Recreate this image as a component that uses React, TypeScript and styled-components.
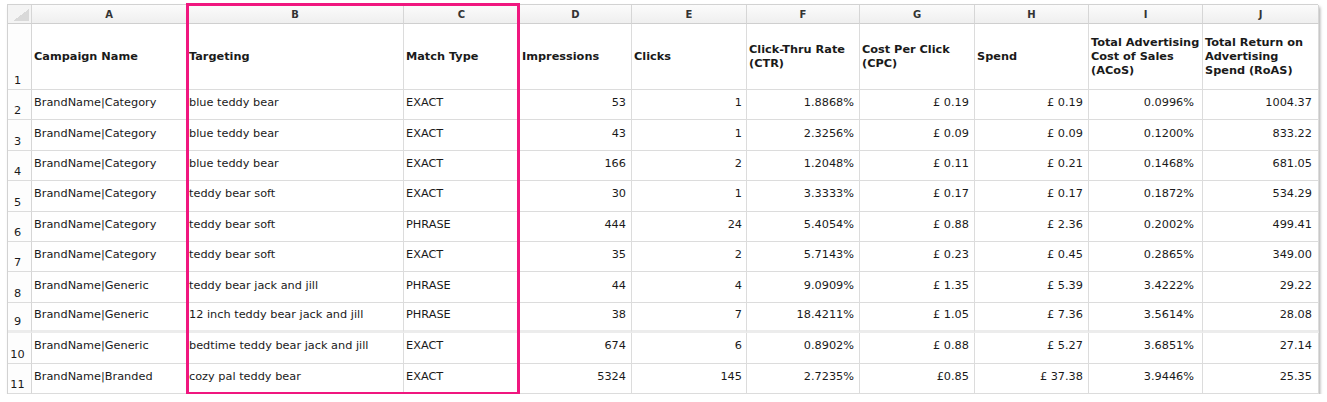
import React from "react";
import styled, { createGlobalStyle } from "styled-components";

const GlobalStyle = createGlobalStyle`
  html, body { margin: 0; padding: 0; background: #ffffff; }
  body { font-family: "DejaVu Sans", "Verdana", sans-serif; color: #1a1a1a; }
`;

const COLS = "24px 155px 217px 116px 112px 115px 113px 115px 114px 114px 116px";

const Page = styled.div`
  padding: 4px 0 0 7px;
`;

const Sheet = styled.div`
  position: relative;
  width: 1311px;
  border-top: 1px solid #d2d2d2;
  border-left: 1px solid #d2d2d2;
  box-sizing: border-box;
  box-shadow: 2px 3px 3px rgba(0, 0, 0, 0.35);
  background: #fff;
`;

const Row = styled.div<{ $h: number }>`
  display: grid;
  grid-template-columns: ${COLS};
  height: ${(p) => p.$h}px;
`;

const LetterCell = styled.div`
  box-sizing: border-box;
  border-right: 1px solid #d6d6d6;
  border-bottom: 1px solid #cfcfcf;
  background: linear-gradient(#fbfbfb, #efefef);
  display: flex;
  align-items: center;
  justify-content: center;
  font-size: 10px;
  font-weight: bold;
  color: #333;
`;

const Corner = styled.div`
  box-sizing: border-box;
  border-right: 1px solid #d6d6d6;
  border-bottom: 1px solid #cfcfcf;
  background: #f4f4f4;
  padding: 4px 2px 2px 5px;
  display: flex;
`;

const CornerTriangle = styled.div`
  flex: 1;
  background: linear-gradient(to bottom right, transparent 50%, #d9d9d9 50%);
`;

const RowNum = styled.div<{ $thick?: boolean }>`
  box-sizing: border-box;
  border-right: 1px solid #d6d6d6;
  border-bottom: ${(p) => (p.$thick ? "3px solid #ececec" : "1px solid #dcdcdc")};
  background: #fdfdfd;
  display: flex;
  align-items: flex-end;
  justify-content: center;
  padding: 0 4px 2px 0;
  font-size: 11.3px;
  color: #1a1a1a;
`;

const Cell = styled.div<{ $align?: "left" | "right"; $pr?: number; $thick?: boolean; $head?: boolean }>`
  box-sizing: border-box;
  border-right: 1px solid #dcdcdc;
  border-bottom: ${(p) => (p.$thick ? "3px solid #ececec" : "1px solid #dcdcdc")};
  display: flex;
  align-items: center;
  justify-content: ${(p) => (p.$align === "right" ? "flex-end" : "flex-start")};
  padding: ${(p) => (p.$head ? "0 1px 0 2px" : `0 ${p.$pr ?? 5}px 3px 2px`)};
  font-size: 11.3px;
  line-height: 14px;
  font-weight: ${(p) => (p.$head ? "bold" : "normal")};
  white-space: ${(p) => (p.$head ? "normal" : "nowrap")};
  color: #1a1a1a;
  overflow: hidden;
`;

const Highlight = styled.div`
  position: absolute;
  left: 178px;
  top: -2px;
  width: 334px;
  height: 392px;
  border: 3px solid #f0177f;
  box-sizing: border-box;
  pointer-events: none;
`;

const letters = ["A", "B", "C", "D", "E", "F", "G", "H", "I", "J"];

const headers = [
  "Campaign Name",
  "Targeting",
  "Match Type",
  "Impressions",
  "Clicks",
  "Click-Thru Rate (CTR)",
  "Cost Per Click (CPC)",
  "Spend",
  "Total Advertising Cost of Sales (ACoS)",
  "Total Return on Advertising Spend (RoAS)",
];

const rows: string[][] = [
  ["BrandName|Category", "blue teddy bear", "EXACT", "53", "1", "1.8868%", "£ 0.19", "£ 0.19", "0.0996%", "1004.37"],
  ["BrandName|Category", "blue teddy bear", "EXACT", "43", "1", "2.3256%", "£ 0.09", "£ 0.09", "0.1200%", "833.22"],
  ["BrandName|Category", "blue teddy bear", "EXACT", "166", "2", "1.2048%", "£ 0.11", "£ 0.21", "0.1468%", "681.05"],
  ["BrandName|Category", "teddy bear soft", "EXACT", "30", "1", "3.3333%", "£ 0.17", "£ 0.17", "0.1872%", "534.29"],
  ["BrandName|Category", "teddy bear soft", "PHRASE", "444", "24", "5.4054%", "£ 0.88", "£ 2.36", "0.2002%", "499.41"],
  ["BrandName|Category", "teddy bear soft", "EXACT", "35", "2", "5.7143%", "£ 0.23", "£ 0.45", "0.2865%", "349.00"],
  ["BrandName|Generic", "teddy bear jack and jill", "PHRASE", "44", "4", "9.0909%", "£ 1.35", "£ 5.39", "3.4222%", "29.22"],
  ["BrandName|Generic", "12 inch teddy bear jack and jill", "PHRASE", "38", "7", "18.4211%", "£ 1.05", "£ 7.36", "3.5614%", "28.08"],
  ["BrandName|Generic", "bedtime teddy bear jack and jill", "EXACT", "674", "6", "0.8902%", "£ 0.88", "£ 5.27", "3.6851%", "27.14"],
  ["BrandName|Branded", "cozy pal teddy bear", "EXACT", "5324", "145", "2.7235%", "£0.85", "£ 37.38", "3.9446%", "25.35"],
];

const rightPad = [5, 5, 5, 5, 4, 5, 5, 5, 8, 6];

export default function App() {
  return (
    <>
      <GlobalStyle />
      <Page>
        <Sheet>
          <Row $h={19}>
            <Corner>
              <CornerTriangle />
            </Corner>
            {letters.map((l) => (
              <LetterCell key={l}>{l}</LetterCell>
            ))}
          </Row>
          <Row $h={66}>
            <RowNum>1</RowNum>
            {headers.map((h) => (
              <Cell key={h} $head>
                {h}
              </Cell>
            ))}
          </Row>
          {rows.map((r, i) => {
            const thick = i === 7;
            return (
              <Row key={i} $h={30.4}>
                <RowNum $thick={thick}>{i + 2}</RowNum>
                {r.map((v, j) => (
                  <Cell key={j} $align={j >= 3 ? "right" : "left"} $pr={rightPad[j]} $thick={thick}>
                    {v}
                  </Cell>
                ))}
              </Row>
            );
          })}
          <Highlight />
        </Sheet>
      </Page>
    </>
  );
}
